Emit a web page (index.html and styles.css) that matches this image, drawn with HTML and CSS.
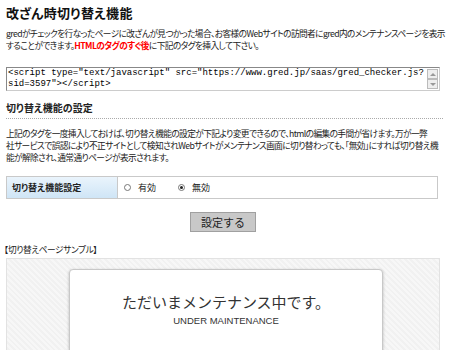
FILE: index.html
```html
<!DOCTYPE html>
<html lang="ja">
<head>
<meta charset="UTF-8">
<title>改ざん時切り替え機能</title>
<link rel="stylesheet" href="styles.css">
</head>
<body>
	<div class="wrap">
		<h2 class="title">改ざん時切り替え機能</h2>
		<p class="lead">gredがチェックを行なったページに改ざんが見つかった場合、お客様のWebサイトの訪問者にgred内のメンテナンスページを表示<br>することができます。<em>HTMLのタグのすぐ後</em>に下記のタグを挿入して下さい。</p>

		<div class="code">
			<div class="code-text">&lt;script type="text/javascript" src="https://www.gred.jp/saas/gred_checker.js?<br>sid=3597"&gt;&lt;/script&gt;</div>
			<div class="scroll">
				<span class="arrow up"></span>
				<span class="arrow down"></span>
			</div>
		</div>

		<h3 class="sub">切り替え機能の設定</h3>
		<p class="desc">上記のタグを一度挿入しておけば、切り替え機能の設定が下記より変更できるので、htmlの編集の手間が省けます。万が一弊<br>社サービスで誤認により不正サイトとして検知されWebサイトがメンテナンス画面に切り替わっても、「無効」にすれば切り替え機<br>能が解除され、通常通りページが表示されます。</p>

		<div class="setting">
			<div class="setting-label">切り替え機能設定</div>
			<div class="setting-value">
				<label class="radio"><span class="dot"></span>有効</label>
				<label class="radio"><span class="dot on"></span>無効</label>
			</div>
		</div>

		<div class="submit">
			<button class="btn">設定する</button>
		</div>

		<p class="sample-title">【切り替えページサンプル】</p>
		<div class="sample">
			<div class="card">
				<p class="card-ja">ただいまメンテナンス中です。</p>
				<p class="card-en">UNDER MAINTENANCE</p>
			</div>
		</div>
	</div>
</body>
</html>
```

FILE: styles.css
```css
*{
	margin:0;
	padding:0;
	box-sizing:border-box;
}
body{
	background:#fff;
	color:#222;
	font-family:"Noto Sans CJK JP","Liberation Sans",sans-serif;
	font-feature-settings:"palt";
	font-size:9px;
	overflow:hidden;
	height:350px;
}
.wrap{
	padding:5px 7px 0 6px;
}
.title{
	font-size:13px;
	line-height:16px;
	font-weight:bold;
	letter-spacing:0.3px;
	color:#111;
}
.lead{
	margin-top:7px;
	font-size:8.7px;
	line-height:12px;
	letter-spacing:-0.6px;
	white-space:nowrap;
}
.lead em{
	font-style:normal;
	font-weight:bold;
	color:#f00;
}
.code{
	display:flex;
	margin-top:15px;
	width:434px;
	height:24px;
	border:1px solid #888;
	border-right-color:#ccc;
	border-bottom-color:#ccc;
	background:#fff;
}
.code-text{
	flex:1;
	font-family:"Liberation Mono",monospace;
	font-size:9px;
	line-height:11px;
	padding:0 0 0 1px;
	color:#000;
	white-space:nowrap;
	overflow:hidden;
}
.scroll{
	width:12px;
	display:flex;
	flex-direction:column;
	justify-content:space-between;
	padding:1px 0;
}
.arrow{
	display:flex;
	align-items:center;
	justify-content:center;
	width:11px;
	height:10px;
	background:#eee;
	border:1px solid #bbb;
}
.arrow:after{
	content:"";
	border-left:3px solid transparent;
	border-right:3px solid transparent;
}
.arrow.up:after{
	border-bottom:3px solid #999;
}
.arrow.down:after{
	border-top:3px solid #999;
}
.sub{
	margin-top:11px;
	font-size:10px;
	line-height:12px;
	font-weight:bold;
	padding-bottom:4px;
	border-bottom:1px dotted #aaa;
}
.desc{
	margin-top:9px;
	font-size:8.7px;
	line-height:12px;
	letter-spacing:-0.6px;
	white-space:nowrap;
}
.setting{
	display:flex;
	margin-top:12px;
	width:432px;
	height:23px;
	border:1px solid #c9c9c9;
}
.setting-label{
	width:111px;
	padding-left:5px;
	display:flex;
	align-items:center;
	font-size:9px;
	font-weight:bold;
	background:linear-gradient(#eaf4fc,#cfe5f6);
	border-right:1px solid #c9c9c9;
}
.setting-value{
	flex:1;
	display:flex;
	align-items:center;
	gap:22px;
	padding-left:6px;
}
.radio{
	display:flex;
	align-items:center;
	gap:7px;
}
.dot{
	width:7px;
	height:7px;
	border:1px solid #777;
	border-radius:50%;
	display:flex;
	align-items:center;
	justify-content:center;
}
.dot.on:after{
	content:"";
	width:3px;
	height:3px;
	border-radius:50%;
	background:#222;
}
.submit{
	display:flex;
	justify-content:center;
	margin-top:13px;
	padding-right:3px;
}
.btn{
	width:66px;
	height:20px;
	background:#c8c8c8;
	border:1px solid #a0a0a0;
	font-family:"Noto Sans CJK JP",sans-serif;
	font-size:11px;
	color:#222;
}
.sample-title{
	margin:12px 0 0 -2px;
	font-size:8.7px;
	line-height:12px;
	letter-spacing:-0.4px;
}
.sample{
	margin-top:2px;
	width:434px;
	height:94px;
	overflow:hidden;
	border:1px solid #e2e2e2;
	border-bottom:0;
	background:repeating-linear-gradient(45deg,#f7f7f7 0 2px,#f1f1f1 2px 4px);
	padding:10px 0 0 62px;
}
.card{
	width:314px;
	height:110px;
	background:#fff;
	border:1px solid #c8c8c8;
	border-radius:4px;
	box-shadow:0 1px 3px rgba(0,0,0,0.25);
	text-align:center;
	padding-top:22px;
}
.card-ja{
	font-size:15px;
	line-height:20px;
	color:#333;
	font-feature-settings:normal;
}
.card-en{
	margin-top:3px;
	font-family:"Liberation Sans",sans-serif;
	font-size:9.5px;
	color:#333;
}
```
